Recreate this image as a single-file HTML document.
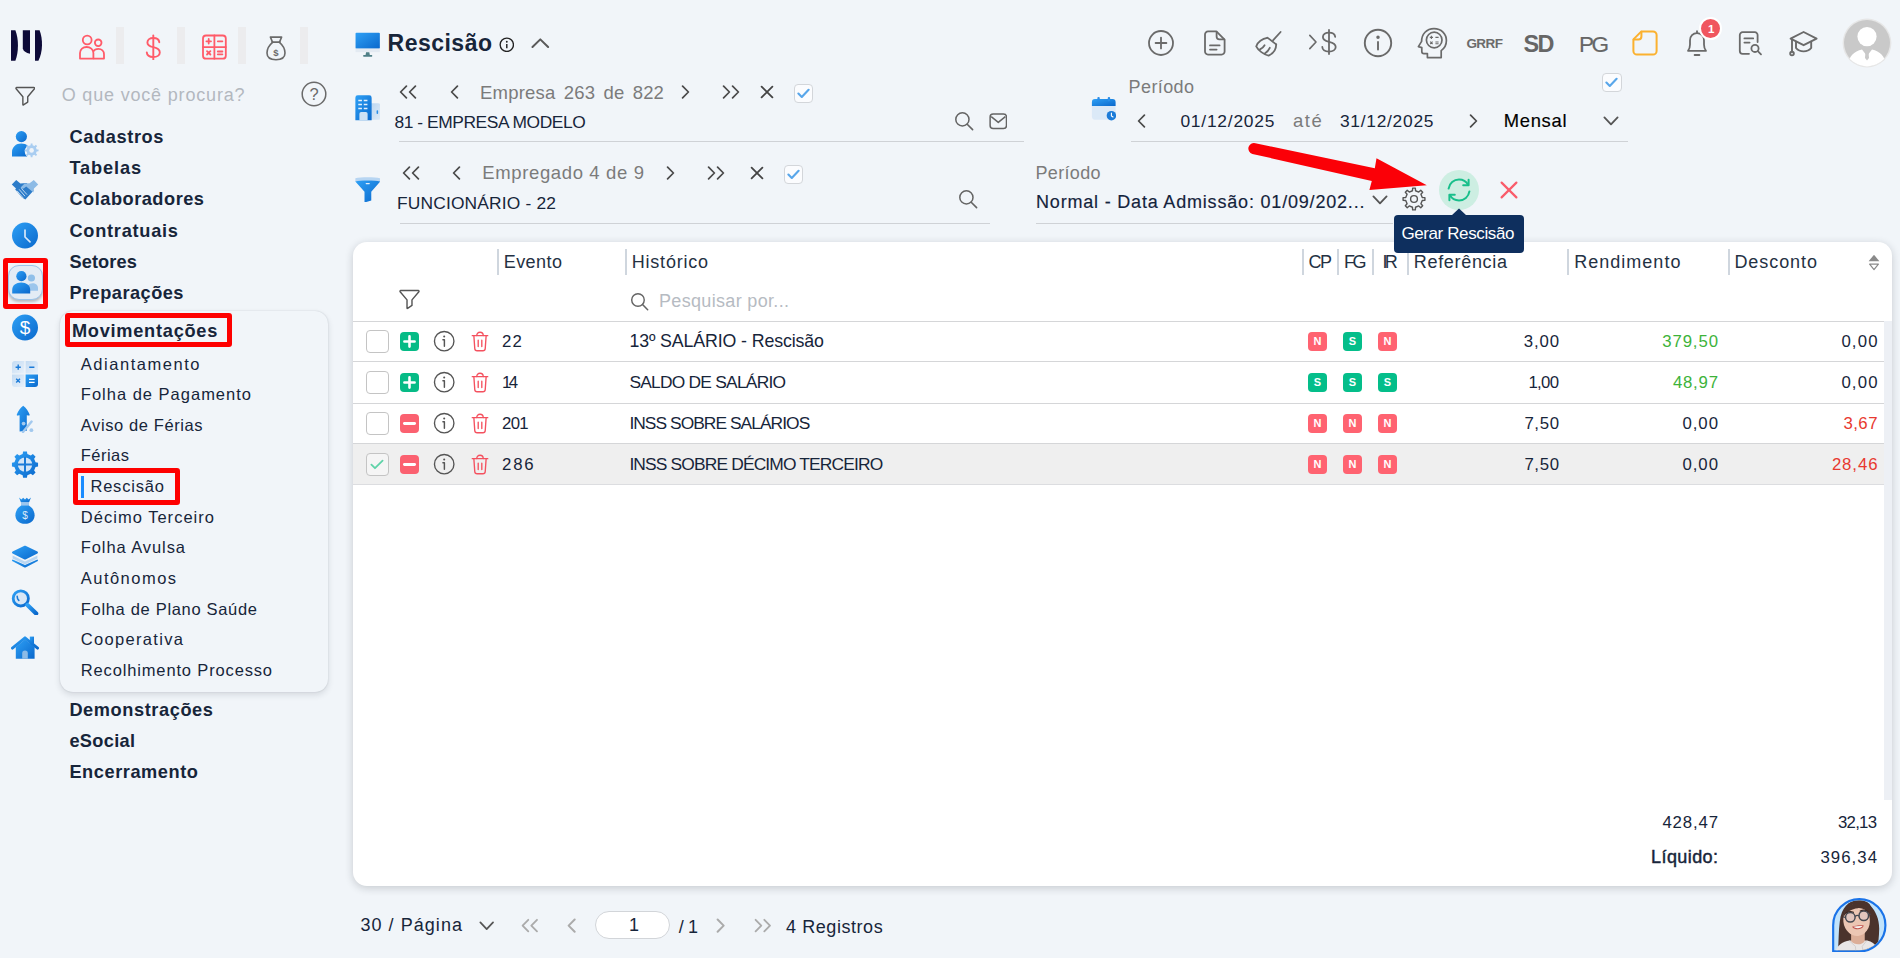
<!DOCTYPE html>
<html lang="pt-BR">
<head>
<meta charset="utf-8">
<title>Rescisão</title>
<style>
*{box-sizing:border-box;margin:0;padding:0}
html,body{width:1900px;height:958px;overflow:hidden}
body{background:#f1f5f9;font-family:"Liberation Sans", sans-serif;color:#17253a;position:relative}
div,span,svg.ic,a,h1,nav,ul,li,button,label,input,header,aside,main,section,footer,table,p{position:absolute}
ul{list-style:none}
a{text-decoration:none;color:inherit}
.tx{white-space:pre;line-height:1;display:block}
.sep{background:#ececee;width:8px;height:37px;top:27px}
.hl{border:5px solid #fe0000;border-radius:3px}
.panel{background:#f1f5f9;border-radius:13px;box-shadow:0 3px 6px rgba(30,40,55,.13),0 0 1.5px rgba(30,40,55,.2)}
.card{background:#fff;border-radius:14px;box-shadow:0 2px 8px rgba(25,30,40,.2)}
.ul{height:1px;background:#cfd2d6}
.vd{width:2px;height:25.6px;top:7.3px;background:#cfd6de}
.rl{height:1px;left:0;width:1531px;background:#d5d6d8}
.cb{width:22.5px;height:22.5px;border:1px solid #c4c4c4;border-radius:4px;background:#fff}
.cbs{width:19px;height:19px;border:1px solid #d3d6da;border-radius:4px;background:#fbfcfe}
.bd{width:19px;height:19px;border-radius:4px;color:#fff;font-weight:700;font-size:11px;line-height:19px;text-align:center}
.bn{background:#ff6371}
.bs{background:#04be8a}
.pm{width:19px;height:19px;border-radius:4px}
.z5{z-index:6}.md{-webkit-text-stroke:0.45px currentColor}.md2{-webkit-text-stroke:0.15px currentColor}</style>
</head>
<body>
<svg width="0" height="0" style="position:absolute"><defs><linearGradient id="gb" x1="0" y1="0" x2="1" y2="1"><stop offset="0" stop-color="#2ea0f5"/><stop offset="1" stop-color="#0a68cc"/></linearGradient><linearGradient id="gl" x1="0" y1="0" x2="1" y2="1"><stop offset="0" stop-color="#c3dbf3"/><stop offset="1" stop-color="#e9f1fa"/></linearGradient><linearGradient id="gl2" x1="0" y1="0" x2="1" y2="1"><stop offset="0" stop-color="#b9d6f2"/><stop offset="1" stop-color="#dfeaf6"/></linearGradient></defs></svg>
<aside style="left:0;top:0;width:340px;height:958px">
<svg class="ic" style="left:9.0px;top:29.0px;" width="34" height="32" viewBox="9 29 34 32" ><g fill="#0d0a38"><path d="M11 30.2 H15.4 C18.8 39 18.8 52 15.4 60.8 H11 Z"/><path d="M22.8 30.2 H30 V53.8 C26 53 23.4 51.4 22.8 48.6 Z"/><path d="M35 30.2 H39.6 C43 39 43 52 38.4 60.8 H35 Z"/></g></svg>
<nav style="left:60px;top:0;width:280px;height:70px">
<svg class="ic" style="left:17.0px;top:33.1px;" width="28" height="28" viewBox="77 33 28 28" ><g fill="none" stroke="#ff5b69" stroke-width="1.8" stroke-linejoin="round"><circle cx="87.2" cy="40" r="4.4"/><path d="M80 58.6 V53 C80 49.4 83 47 86.6 47 C90.2 47 93.4 49.4 93.4 53 V58.6 Z"/><circle cx="98.2" cy="42.8" r="3.3"/><path d="M93.4 58.6 H104 V54.2 C104 51 101.6 48.8 98.4 48.8 C96 48.8 94.2 49.8 93.2 51.4"/></g></svg>
<svg class="ic" style="left:79.0px;top:32.0px;" width="28" height="28" viewBox="139 32 28 28" ><g fill="none" stroke="#ff5b69" stroke-width="1.9" stroke-linecap="round"><path d="M153.3 35.4 V59.6"/><path d="M159.3 42.2 C159 39.6 156.6 38 153.3 38 C149.8 38 147.4 39.8 147.4 42.4 C147.4 45.4 150 46.4 153.3 47.2 C156.8 48 159.8 49.2 159.8 52.4 C159.8 55.2 157 57 153.3 57 C149.6 57 147 55.2 146.8 52.4"/></g></svg>
<svg class="ic" style="left:140.0px;top:33.3px;" width="28" height="28" viewBox="200 33.5 28 28" ><g fill="none" stroke="#ff5b69" stroke-width="1.8" stroke-linecap="round"><rect x="203" y="36" width="22.8" height="23.2" rx="3"/><path d="M214.4 36 V59.2 M203 47.6 H225.8"/><path d="M206.4 41.8 H211 M208.7 39.5 V44.1 M217.8 41.8 H222.4"/><path d="M207 51.6 L210.4 55 M210.4 51.6 L207 55 M217.8 52 H222.4 M217.8 54.8 H222.4"/></g></svg>
<svg class="ic" style="left:203.0px;top:34.7px;" width="26" height="26" viewBox="263 34.5 26 26" ><g fill="none" stroke="#6a6a6a" stroke-width="1.6" stroke-linejoin="round" stroke-linecap="round"><path d="M272.4 41.4 L270.4 36.6 H281.6 L279.6 41.4"/><path d="M272 41.6 H280"/><path d="M272.6 41.8 C269.4 44.4 267 48.6 267 52.6 C267 57 270 59.2 276 59.2 C282 59.2 285 57 285 52.6 C285 48.6 282.6 44.4 279.4 41.8"/></g><text x="276" y="55" font-family="Liberation Sans, sans-serif" font-size="9.5" font-weight="700" fill="#6a6a6a" text-anchor="middle">$</text></svg>
<div class="sep" style="left:56px"></div>
<div class="sep" style="left:117px"></div>
<div class="sep" style="left:178px"></div>
<div class="sep" style="left:240px"></div>
</nav>
<svg class="ic" style="left:14.7px;top:85.7px;" width="20.6" height="20.6" viewBox="0 0 22 22" ><path d="M1.8 1.6 H20.2 C20.9 1.6 21.2 2.4 20.8 2.9 L13.6 11.4 V17.2 L9 20.2 C8.6 20.5 8.4 20.2 8.4 19.8 V11.4 L1.2 2.9 C0.8 2.4 1.1 1.6 1.8 1.6 Z" fill="none" stroke="#555" stroke-width="1.5" stroke-linejoin="round"/></svg>
<label class="tx" style="left:61.7px;top:86.00px;font-size:18px;letter-spacing:0.82px;color:#b3b8bf;">O que você procura?</label>
<svg class="ic" style="left:301.0px;top:81.0px;" width="26" height="26" viewBox="0 0 26 26" ><circle cx="13" cy="13" r="11.8" fill="none" stroke="#6a6a6a" stroke-width="1.5"/><text x="13" y="19" font-family="Liberation Sans, sans-serif" font-size="16.5" fill="#6a6a6a" text-anchor="middle">?</text></svg>
<nav style="left:0;top:120px;width:50px;height:560px">
<div class="hl" style="left:2.5px;top:138px;width:45.5px;height:50.5px;"></div>
<div style="left:7.5px;top:144.5px;width:35px;height:35px;border-radius:11px;background:#e3ecf5;border:1px solid #9cc4ea;box-shadow:0 2px 3px rgba(0,0,0,.25)"></div>
<svg class="ic" style="left:11.0px;top:10.0px;" width="28" height="28" viewBox="0 0 28 28" ><circle cx="10.4" cy="6.6" r="5.6" fill="url(#gb)"/><path d="M1 26.6 V22.4 C1 17 5 13.6 10.2 13.6 C13 13.6 15.2 14.4 16.8 16 C14.6 17.4 13.6 19.6 13.8 22 C14 24 15 25.6 16.4 26.6 Z" fill="url(#gb)"/><path d="M19.60 15.30L19.70 13.46L21.50 13.46L21.60 15.30L23.50 16.08L24.87 14.85L26.15 16.13L24.92 17.50L25.70 19.40L27.54 19.50L27.54 21.30L25.70 21.40L24.92 23.30L26.15 24.67L24.87 25.95L23.50 24.72L21.60 25.50L21.50 27.34L19.70 27.34L19.60 25.50L17.70 24.72L16.33 25.95L15.05 24.67L16.28 23.30L15.50 21.40L13.66 21.30L13.66 19.50L15.50 19.40L16.28 17.50L15.05 16.13L16.33 14.85L17.70 16.08Z" fill="#a9cdf1"/><circle cx="20.6" cy="20.4" r="2.3" fill="#f0f4f9"/></svg>
<svg class="ic" style="left:11.0px;top:55.0px;" width="28" height="28" viewBox="0 0 28 28" ><path d="M0.8 9.6 L5.2 5 L9.4 8.4 L15.6 8 L22.6 15.4 L14.4 24.4 L11 22.4 L4.2 14.6 L5 13.4 Z" fill="#2d7cc9"/><path d="M27.2 9.6 L22.8 5 L18.6 8.2 L13.6 8.6 L9.6 12.6 C10.6 14 12.4 14 13.6 12.8 L15.2 11.4 L22.4 17.6 L23 13.4 Z" fill="#8dbbe6"/><path d="M6 15.8 L12.2 23 M8.2 14.4 L14 21.2 M10.4 13.4 L16 19.6" stroke="#cfe2f5" stroke-width="0.9" fill="none"/></svg>
<svg class="ic" style="left:11.0px;top:101.0px;" width="28" height="28" viewBox="0 0 28 28" ><circle cx="14" cy="14.6" r="13" fill="url(#gb)"/><path d="M14 9 V16 L19 20.8" fill="none" stroke="#d6e8fa" stroke-width="1.7" stroke-linecap="round" stroke-linejoin="round"/></svg>
<svg class="ic" style="left:11.0px;top:147.0px;" width="28" height="28" viewBox="0 0 28 28" ><circle cx="20.4" cy="11" r="3.6" fill="#8fbfe9"/><path d="M17 23.8 H27 V21 C27 18 24.6 16.2 21.6 16.2 C19.6 16.2 18 17 17 18.2 Z" fill="#9cc6ec"/><circle cx="10.4" cy="9.2" r="5.1" fill="url(#gb)"/><path d="M1.2 26.4 V23 C1.2 18.4 5 15.6 10.2 15.6 C15.4 15.6 19.2 18.4 19.2 23 V26.4 Z" fill="url(#gb)"/></svg>
<svg class="ic" style="left:11.0px;top:193.0px;" width="28" height="28" viewBox="0 0 28 28" ><circle cx="14" cy="14.6" r="13" fill="url(#gb)"/><text x="14" y="21.2" font-family="Liberation Sans, sans-serif" font-size="19" fill="#fff" text-anchor="middle">$</text></svg>
<svg class="ic" style="left:11.0px;top:240.0px;" width="28" height="28" viewBox="0 0 28 28" ><path d="M4 1 H13.4 V13.4 H1 V4 A3 3 0 0 1 4 1 Z" fill="url(#gl)"/><path d="M14.6 1 H24 A3 3 0 0 1 27 4 V13.4 H14.6 Z" fill="url(#gl)"/><path d="M1 14.6 H13.4 V27 H4 A3 3 0 0 1 1 24 Z" fill="url(#gl)"/><path d="M14.6 14.6 H27 V24 A3 3 0 0 1 24 27 H14.6 Z" fill="url(#gb)"/><path d="M4.6 7.2 H9.8 M7.2 4.6 V9.8 M18.2 7.2 H23.4 M5.2 18.8 L9 22.6 M9 18.8 L5.2 22.6" stroke="#1b7bd8" stroke-width="1.4" fill="none"/><path d="M18 19.4 H23.6 M18 22.4 H23.6" stroke="#fff" stroke-width="1.4" fill="none"/></svg>
<svg class="ic" style="left:11.0px;top:285.0px;" width="28" height="28" viewBox="0 0 28 28" ><path d="M12.2 0.8 C15 3 17.6 6.4 18.6 9.6 C18.8 10.4 18.4 10.8 17.6 10.6 L15.8 10.2 V25.8 L8.6 26.6 V10.2 L6.8 10.6 C6 10.8 5.6 10.4 5.8 9.6 C6.8 6.4 9.4 3 12.2 0.8 Z" fill="url(#gb)"/><path d="M20.6 16.6 L12 27" stroke="#a3c9ee" stroke-width="2.4" stroke-linecap="round"/><circle cx="12.6" cy="18.6" r="1.9" fill="#a3c9ee"/><circle cx="20.4" cy="25.2" r="1.9" fill="#a3c9ee"/></svg>
<svg class="ic" style="left:11.0px;top:331.0px;" width="28" height="28" viewBox="0 0 28 28" ><path d="M11.65 3.06L12.08 0.54L15.92 0.54L16.35 3.06L19.79 4.49L21.88 3.01L24.59 5.72L23.11 7.81L24.54 11.25L27.06 11.68L27.06 15.52L24.54 15.95L23.11 19.39L24.59 21.48L21.88 24.19L19.79 22.71L16.35 24.14L15.92 26.66L12.08 26.66L11.65 24.14L8.21 22.71L6.12 24.19L3.41 21.48L4.89 19.39L3.46 15.95L0.94 15.52L0.94 11.68L3.46 11.25L4.89 7.81L3.41 5.72L6.12 3.01L8.21 4.49Z" fill="url(#gb)"/><circle cx="14" cy="13.6" r="7.2" fill="#d3e5f7"/><path d="M14 6 V21.2 M6.4 13.6 H21.6" stroke="#1b7bd8" stroke-width="2" fill="none"/></svg>
<svg class="ic" style="left:11.0px;top:377.0px;" width="28" height="28" viewBox="0 0 28 28" ><path d="M8 0.6 L10.4 2.4 L12.2 0.8 L14 2.4 L15.8 0.8 L17.6 2.4 L20 0.6 L18 5.4 H10 Z" fill="url(#gb)"/><rect x="10" y="5.2" width="8" height="3.6" fill="#9cc6ee"/><path d="M10.2 8.6 H17.8 C21.4 10.6 23.6 14.4 23.6 18.2 C23.6 23.2 19.6 26.8 14 26.8 C8.4 26.8 4.4 23.2 4.4 18.2 C4.4 14.4 6.6 10.6 10.2 8.6 Z" fill="url(#gb)"/><text x="14" y="21.6" font-family="Liberation Sans, sans-serif" font-size="10" fill="#dcebfa" text-anchor="middle">$</text></svg>
<svg class="ic" style="left:11.0px;top:422.0px;" width="28" height="28" viewBox="0 0 28 28" ><path d="M1.6 17.4 L14 23 L26.4 17.4 C27.2 17.8 27.2 18.8 26.4 19.2 L15 25.2 C14.4 25.5 13.6 25.5 13 25.2 L1.6 19.2 C0.8 18.8 0.8 17.8 1.6 17.4 Z" fill="url(#gb)"/><path d="M1.6 13.6 L14 19.4 L26.4 13.6 V16.6 L14 22.4 L1.6 16.6 Z" fill="#b9d6f2"/><path d="M13 4 C13.6 3.7 14.4 3.7 15 4 L26.4 9.6 C27.2 10 27.2 11 26.4 11.4 L15 17.2 C14.4 17.5 13.6 17.5 13 17.2 L1.6 11.4 C0.8 11 0.8 10 1.6 9.6 Z" fill="url(#gb)"/></svg>
<svg class="ic" style="left:11.0px;top:467.0px;" width="28" height="28" viewBox="0 0 28 28" ><circle cx="9.8" cy="11.4" r="7.6" fill="#d8e7f6"/><circle cx="9.8" cy="11.4" r="7.6" fill="none" stroke="url(#gb)" stroke-width="2.8"/><path d="M16.4 18 L25.2 26.6" stroke="url(#gb)" stroke-width="4.2" stroke-linecap="round"/><path d="M6.2 9.4 C6.2 11 6.8 12.4 7.8 13.4" stroke="#1b7bd8" stroke-width="1.6" fill="none" stroke-linecap="round"/></svg>
<svg class="ic" style="left:11.0px;top:513.0px;" width="28" height="28" viewBox="0 0 28 28" ><rect x="18.8" y="3.6" width="4.2" height="9" fill="url(#gb)"/><path d="M4.8 14 L14 6.4 L23.6 14 V25.8 H4.8 Z" fill="url(#gb)"/><path d="M1.4 15.2 L14 4.8 L26.6 15.2" fill="none" stroke="url(#gb)" stroke-width="2.8" stroke-linecap="round" stroke-linejoin="round"/><path d="M11.2 25.8 V20.4 A2.8 2.8 0 0 1 16.8 20.4 V25.8 Z" fill="#8dbbe6"/></svg>
</nav>
<nav style="left:60px;top:120px;width:280px;height:680px">
<div class="panel" style="left:0px;top:191px;width:267.6px;height:381px;"></div>
<div class="hl" style="left:5px;top:193px;width:167px;height:34px;"></div>
<div class="hl" style="left:13.2px;top:348px;width:106.8px;height:37px;"></div>
<div style="left:21px;top:356px;width:3px;height:22px;background:#1a8cff"></div>
<a class="tx" style="left:9.4px;top:8.00px;font-size:18.2px;letter-spacing:0.64px;font-weight:700;">Cadastros</a>
<a class="tx" style="left:9.4px;top:39.00px;font-size:18.2px;letter-spacing:0.87px;font-weight:700;">Tabelas</a>
<a class="tx" style="left:9.4px;top:70.00px;font-size:18.2px;letter-spacing:0.52px;font-weight:700;">Colaboradores</a>
<a class="tx" style="left:9.4px;top:102.00px;font-size:18.2px;letter-spacing:0.75px;font-weight:700;">Contratuais</a>
<a class="tx" style="left:9.4px;top:133.00px;font-size:18.2px;letter-spacing:0.14px;font-weight:700;">Setores</a>
<a class="tx" style="left:9.4px;top:164.00px;font-size:18.2px;letter-spacing:0.49px;font-weight:700;">Preparações</a>
<a class="tx" style="left:11.9px;top:202.00px;font-size:18.2px;letter-spacing:0.75px;font-weight:700;">Movimentações</a>
<a class="tx" style="left:20.8px;top:236.00px;font-size:16.5px;letter-spacing:1.53px;">Adiantamento</a>
<a class="tx" style="left:20.8px;top:266.00px;font-size:16.5px;letter-spacing:1.00px;">Folha de Pagamento</a>
<a class="tx" style="left:20.8px;top:297.00px;font-size:16.5px;letter-spacing:0.60px;">Aviso de Férias</a>
<a class="tx" style="left:20.8px;top:327.00px;font-size:16.5px;letter-spacing:0.47px;">Férias</a>
<a class="tx" style="left:30.4px;top:358.00px;font-size:16.5px;letter-spacing:0.82px;">Rescisão</a>
<a class="tx" style="left:20.8px;top:389.00px;font-size:16.5px;letter-spacing:1.02px;">Décimo Terceiro</a>
<a class="tx" style="left:20.8px;top:419.00px;font-size:16.5px;letter-spacing:0.91px;">Folha Avulsa</a>
<a class="tx" style="left:20.8px;top:450.00px;font-size:16.5px;letter-spacing:1.47px;">Autônomos</a>
<a class="tx" style="left:20.8px;top:481.00px;font-size:16.5px;letter-spacing:0.68px;">Folha de Plano Saúde</a>
<a class="tx" style="left:20.8px;top:511.00px;font-size:16.5px;letter-spacing:1.32px;">Cooperativa</a>
<a class="tx" style="left:20.8px;top:542.00px;font-size:16.5px;letter-spacing:0.85px;">Recolhimento Processo</a>
<a class="tx" style="left:9.4px;top:581.00px;font-size:18.2px;letter-spacing:0.59px;font-weight:700;">Demonstrações</a>
<a class="tx" style="left:9.4px;top:612.00px;font-size:18.2px;letter-spacing:0.32px;font-weight:700;">eSocial</a>
<a class="tx" style="left:9.4px;top:643.00px;font-size:18.2px;letter-spacing:0.57px;font-weight:700;">Encerramento</a>
</nav>
</aside>
<header style="left:340px;top:0;width:1560px;height:70px">
<svg class="ic" style="left:14.9px;top:32.4px;" width="25.4" height="25.4" viewBox="0 0 28 28" ><rect x="0.6" y="0.8" width="26.8" height="17.6" rx="1" fill="url(#gb)"/><rect x="0.6" y="18.2" width="26.8" height="4" fill="#e3eaf2"/><path d="M12.2 22.2 H15.8 L16.4 25.6 H11.6 Z" fill="#4f7f86"/><rect x="9" y="25.4" width="10" height="1.8" rx="0.6" fill="#4f7f86"/></svg>
<h1 class="tx" style="left:47.6px;top:32.00px;font-size:23px;letter-spacing:0.48px;font-weight:700;">Rescisão</h1>
<svg class="ic" style="left:158.6px;top:36.6px;" width="15.6" height="15.6" viewBox="0 0 15 15" ><circle cx="7.5" cy="7.5" r="6.4" fill="none" stroke="#222" stroke-width="1.3"/><path d="M7.5 6.8 V10.8" stroke="#222" stroke-width="1.4"/><circle cx="7.5" cy="4.6" r="0.9" fill="#222"/></svg>
<svg class="ic" style="left:190.2px;top:32.9px;" width="20.6" height="20.6" viewBox="0 0 20 20" ><path d="M2.4 13.6 L10 6.2 L17.6 13.6" fill="none" stroke="#5a5a5a" stroke-width="2" stroke-linecap="round" stroke-linejoin="round"/></svg>
<svg class="ic" style="left:807.0px;top:29.0px;" width="28" height="28" viewBox="0 0 28 28" ><g fill="none" stroke="#6a6a6a" stroke-width="1.8" stroke-linecap="round" stroke-linejoin="round"><circle cx="14" cy="14" r="12"/><path d="M8.6 14 H19.4 M14 8.6 V19.4"/></g></svg>
<svg class="ic" style="left:862.0px;top:30.0px;" width="26" height="26" viewBox="0 0 26 26" ><g fill="none" stroke="#6a6a6a" stroke-width="1.8" stroke-linecap="round" stroke-linejoin="round"><path d="M6 1.4 H14.4 L22.6 9.6 V21.6 A3 3 0 0 1 19.6 24.6 H6 A3 3 0 0 1 3 21.6 V4.4 A3 3 0 0 1 6 1.4 Z"/><path d="M14.6 1.8 V6.6 A2.8 2.8 0 0 0 17.4 9.4 H22.2"/><path d="M8 15.4 H17.6 M8 19.6 H14.6"/></g></svg>
<svg class="ic" style="left:914.0px;top:29.0px;" width="28" height="28" viewBox="0 0 28 28" ><g fill="none" stroke="#6a6a6a" stroke-width="1.8" stroke-linecap="round" stroke-linejoin="round"><path d="M26.6 3 L19 11.4"/><path d="M13.4 8.6 L22.2 15.4"/><path d="M13.2 8.8 C8.6 9.6 3.4 13 2.2 17.4 C4.2 21.4 9.8 25.6 14.6 26.6 C19.4 24.2 22.2 19.6 22.2 15.4"/><path d="M6 20.4 C8 19.4 9.6 18 10.6 16.2 M10.8 24.4 C13 23 14.8 21 15.8 18.8"/></g></svg>
<svg class="ic" style="left:1023.0px;top:28.0px;" width="30" height="30" viewBox="0 0 30 30" ><g fill="none" stroke="#6a6a6a" stroke-width="1.9" stroke-linecap="round" stroke-linejoin="round"><circle cx="15" cy="15" r="13.2"/><path d="M15 14 V21.6"/><circle cx="15" cy="9.2" r="0.8" fill="#6a6a6a"/></g></svg>
<svg class="ic" style="left:1076.0px;top:27.0px;" width="32" height="32" viewBox="0 0 32 32" ><g fill="none" stroke="#6a6a6a" stroke-width="1.7" stroke-linecap="round" stroke-linejoin="round"><path d="M11.4 30.6 V26.6 H8 C6.6 26.6 5.8 25.8 5.8 24.4 V20.6 L2.4 19.6 L5.6 14.4 C5.6 7 10.6 1.6 18 1.6 C25.4 1.6 30.4 7 30.4 13.6 C30.4 18.4 28.2 21.6 25.2 23.6 V30.6 Z"/><circle cx="18.2" cy="13" r="7.8"/></g><g fill="none" stroke="#6a6a6a" stroke-width="1.1"><path d="M13.8 10.4 H17 M15.4 8.8 V12 M19.4 10.4 H22.6 M14.2 14.6 L16.6 17 M16.6 14.6 L14.2 17 M19.4 15 H22.6 M19.4 16.8 H22.6"/></g></svg>
<svg class="ic" style="left:1291.0px;top:29.0px;" width="28" height="28" viewBox="0 0 28 28" ><g fill="none" stroke="#fbb12f" stroke-width="2" stroke-linecap="round" stroke-linejoin="round"><path d="M10.4 2.4 H22 A3.6 3.6 0 0 1 25.6 6 V22 A3.6 3.6 0 0 1 22 25.6 H6 A3.6 3.6 0 0 1 2.4 22 V10.4 Z"/><path d="M10.4 2.8 V7.4 A3 3 0 0 1 7.4 10.4 H2.8"/></g></svg>
<svg class="ic" style="left:1343.0px;top:29.0px;" width="28" height="28" viewBox="0 0 28 28" ><g fill="none" stroke="#6a6a6a" stroke-width="1.8" stroke-linecap="round" stroke-linejoin="round"><path d="M14 2.2 V4"/><path d="M5 21.8 C6.6 20 7 18.4 7 15.6 V11.4 C7 7.2 10 4.2 14 4.2 C18 4.2 21 7.2 21 11.4 V15.6 C21 18.4 21.4 20 23 21.8 Z"/><path d="M11.6 26 H16.4"/></g></svg>
<svg class="ic" style="left:1397.0px;top:30.0px;" width="26" height="26" viewBox="0 0 26 26" ><g fill="none" stroke="#6a6a6a" stroke-width="1.8" stroke-linecap="round" stroke-linejoin="round"><path d="M20.6 12 V5 A2.8 2.8 0 0 0 17.8 2.2 H5.6 A2.8 2.8 0 0 0 2.8 5 V21 A2.8 2.8 0 0 0 5.6 23.8 H12"/><path d="M7.4 8.4 H16.2 M7.4 12.6 H12.6"/><circle cx="18" cy="18.4" r="3.6"/><path d="M20.8 21.2 L24 24.4"/></g></svg>
<svg class="ic" style="left:1448.0px;top:28.0px;" width="30" height="30" viewBox="0 0 30 30" ><g fill="none" stroke="#6a6a6a" stroke-width="1.9" stroke-linecap="round" stroke-linejoin="round"><path d="M15.6 4 L28.6 10.6 L15.6 17.2 L2.6 10.6 Z"/><path d="M8 13.6 V20 C10 22.4 12.6 23.4 15.6 23.4 C18.6 23.4 21.2 22.4 23.2 20 V13.6"/><path d="M4 11.6 V23.6"/><circle cx="4" cy="25.6" r="1.8"/></g></svg>
<svg class="ic" style="left:968.2px;top:34.1px;" width="10" height="16" viewBox="0 0 10 16" ><path d="M1.8 1.4 L8 8 L1.8 14.6" fill="none" stroke="#6a6a6a" stroke-width="1.6" stroke-linecap="round" stroke-linejoin="round"/></svg>
<svg class="ic" style="left:981.0px;top:29.0px;" width="16" height="26" viewBox="145.3 34.6 16 26" ><g fill="none" stroke="#6a6a6a" stroke-width="1.8" stroke-linecap="round"><path d="M153.3 35.6 V59.6"/><path d="M159.5 42.4 C159.2 39.8 156.8 38.2 153.3 38.2 C149.8 38.2 147.2 40 147.2 42.6 C147.2 45.6 149.8 46.6 153.3 47.4 C157 48.2 160 49.4 160 52.6 C160 55.4 157.2 57.2 153.3 57.2 C149.4 57.2 146.8 55.4 146.6 52.6"/></g></svg>
<span class="tx" style="left:1126.4px;top:37.00px;font-size:13.5px;letter-spacing:-0.55px;font-weight:700;color:#6b6b6b;">GRRF</span>
<span class="tx" style="left:1183.4px;top:33.00px;font-size:23.4px;letter-spacing:-1.50px;font-weight:700;color:#666;">SD</span>
<span class="tx md2" style="left:1239.0px;top:34.00px;font-size:22.6px;letter-spacing:-2.60px;color:#666;">PG</span>
<div style="left:1358.8px;top:16.9px;width:23.4px;height:23.4px;border-radius:50%;background:#f0565f;border:2px solid #fff"></div>
<span class="tx" style="left:1368.0px;top:24.00px;font-size:11.5px;letter-spacing:-1.01px;font-weight:700;color:#fff;">1</span>
<svg class="ic" style="left:1502.0px;top:17.5px;" width="50" height="50" viewBox="0 0 50 50" ><clipPath id="cav"><circle cx="25" cy="25" r="23.4"/></clipPath><circle cx="25" cy="25" r="24.4" fill="#e6e6e6"/><circle cx="25" cy="25" r="23" fill="#c9c9c9"/><g clip-path="url(#cav)"><circle cx="25" cy="18.6" r="9.6" fill="#fff"/><path d="M6 50 C6 38 12 33.4 20 31.4 L25 38 L30 31.4 C38 33.4 44 38 44 50 Z" fill="#fff"/><path d="M23.6 32.6 H26.4 L27 40 L25 42.6 L23 40 Z" fill="#c9c9c9"/></g></svg>
</header>
<section style="left:340px;top:70px;width:1560px;height:165px">
<svg class="ic" style="left:14.8px;top:25.4px;" width="25.6" height="25.6" viewBox="0 0 28 28" ><path d="M17 9 H25.4 A2.2 2.2 0 0 1 27.6 11.2 V25 A2.2 2.2 0 0 1 25.4 27.2 H17 Z" fill="url(#gl2)"/><rect x="23.6" y="16.6" width="1.7" height="4.2" rx="0.8" fill="#2a8ee8"/><path d="M3 0.4 H15.6 A2.6 2.6 0 0 1 18.2 3 V27.6 H0.4 V3 A2.6 2.6 0 0 1 3 0.4 Z" fill="url(#gb)"/><path d="M3.6 6 H7.6 M9.6 6 H13.6 M3.6 10.4 H7.6 M9.6 10.4 H13.6 M3.6 14.8 H7.6 M9.6 14.8 H13.6" stroke="#e6f1fc" stroke-width="1.8" fill="none"/><path d="M4.8 27.6 V20.6 A2 2 0 0 1 6.8 18.6 H11.8 A2 2 0 0 1 13.8 20.6 V27.6 Z" fill="#cfe1f4"/></svg>
<svg class="ic" style="left:58.0px;top:15.0px;" width="20" height="14" viewBox="0 0 20 14" ><path d="M8.4 1.2 L2.6 7 L8.4 12.8 M17.4 1.2 L11.6 7 L17.4 12.8" fill="none" stroke="#4a4a4a" stroke-width="1.7" stroke-linecap="round" stroke-linejoin="round"/></svg>
<svg class="ic" style="left:109.7px;top:15.4px;" width="9" height="14" viewBox="0 0 9 14" ><path d="M7.4 1.2 L1.6 7 L7.4 12.8" fill="none" stroke="#4a4a4a" stroke-width="1.7" stroke-linecap="round" stroke-linejoin="round"/></svg>
<span class="tx" style="left:140.1px;top:14.00px;font-size:18.5px;letter-spacing:0.18px;color:#7b7b7b;word-spacing:3px;">Empresa 263 de 822</span>
<svg class="ic" style="left:340.5px;top:15.0px;" width="9" height="14" viewBox="0 0 9 14" ><path d="M1.6 1.2 L7.4 7 L1.6 12.8" fill="none" stroke="#4a4a4a" stroke-width="1.7" stroke-linecap="round" stroke-linejoin="round"/></svg>
<svg class="ic" style="left:381.0px;top:15.0px;" width="20" height="14" viewBox="0 0 20 14" ><path d="M2.6 1.2 L8.4 7 L2.6 12.8 M11.6 1.2 L17.4 7 L11.6 12.8" fill="none" stroke="#4a4a4a" stroke-width="1.7" stroke-linecap="round" stroke-linejoin="round"/></svg>
<svg class="ic" style="left:420.0px;top:15.0px;" width="14" height="14" viewBox="0 0 14 14" ><path d="M1.6 1.6 L12.4 12.4 M12.4 1.6 L1.6 12.4" fill="none" stroke="#444" stroke-width="1.8" stroke-linecap="round" stroke-linejoin="round"/></svg>
<div class="cbs" style="left:454.1px;top:14.099999999999994px;width:19px;height:18.6px;"><svg class="ic" style="left:2px;top:3px" width="13" height="11" viewBox="0 0 13 11"><path d="M1.4 5.6 L4.8 9 L11.6 1.8" fill="none" stroke="#58a6ea" stroke-width="2.1" stroke-linecap="round" stroke-linejoin="round"/></svg></div>
<span class="tx" style="left:54.5px;top:44.00px;font-size:17.4px;letter-spacing:-0.44px;">81 - EMPRESA MODELO</span>
<svg class="ic" style="left:613.9px;top:41.0px;" width="20" height="20" viewBox="0 0 20 20" ><circle cx="8.4" cy="8.4" r="6.6" fill="none" stroke="#646464" stroke-width="1.5"/><path d="M13.2 13.2 L18.6 18.6" stroke="#646464" stroke-width="1.6" stroke-linecap="round"/></svg>
<svg class="ic" style="left:648.7px;top:41.7px;" width="18.6" height="18.6" viewBox="0 0 20 20" ><rect x="1.2" y="2.2" width="17.6" height="15.6" rx="3.2" fill="none" stroke="#646464" stroke-width="1.6"/><path d="M2.4 5 L10 11.2 L17.6 5" fill="none" stroke="#646464" stroke-width="1.6" stroke-linejoin="round"/></svg>
<div class="ul" style="left:59.30000000000001px;top:71px;width:625px;height:1px;"></div>
<svg class="ic" style="left:750.8px;top:25.8px;" width="25.5" height="25.5" viewBox="0 0 28 28" ><rect x="1" y="3.4" width="26" height="22.6" rx="3.4" fill="#dbe9f7"/><path d="M4.4 3.4 H23.6 A3.4 3.4 0 0 1 27 6.8 V11 H1 V6.8 A3.4 3.4 0 0 1 4.4 3.4 Z" fill="url(#gb)"/><rect x="7" y="1" width="2.6" height="5" rx="1.2" fill="#2a8ee8"/><rect x="18.4" y="1" width="2.6" height="5" rx="1.2" fill="#2a8ee8"/><circle cx="22.4" cy="21.6" r="5.2" fill="#1b7bd8"/><path d="M22.4 18.8 V21.8 L24.2 23" stroke="#fff" stroke-width="1.2" fill="none" stroke-linecap="round"/></svg>
<label class="tx" style="left:788.6px;top:8.00px;font-size:18px;letter-spacing:0.39px;color:#7b7b7b;">Período</label>
<div class="cbs" style="left:1262.3px;top:3.299999999999997px;width:19.4px;height:18.6px;"><svg class="ic" style="left:2px;top:3px" width="13" height="11" viewBox="0 0 13 11"><path d="M1.4 5.6 L4.8 9 L11.6 1.8" fill="none" stroke="#58a6ea" stroke-width="2.1" stroke-linecap="round" stroke-linejoin="round"/></svg></div>
<svg class="ic" style="left:796.5px;top:44.0px;" width="9" height="14" viewBox="0 0 9 14" ><path d="M7.4 1.2 L1.6 7 L7.4 12.8" fill="none" stroke="#4a4a4a" stroke-width="1.7" stroke-linecap="round" stroke-linejoin="round"/></svg>
<span class="tx" style="left:840.4px;top:43.00px;font-size:17.4px;letter-spacing:0.78px;">01/12/2025</span>
<span class="tx" style="left:953.1px;top:42.00px;font-size:18.5px;letter-spacing:1.44px;color:#7b7b7b;">até</span>
<span class="tx" style="left:999.9px;top:43.00px;font-size:17.4px;letter-spacing:0.73px;">31/12/2025</span>
<svg class="ic" style="left:1128.5px;top:44.0px;" width="9" height="14" viewBox="0 0 9 14" ><path d="M1.6 1.2 L7.4 7 L1.6 12.8" fill="none" stroke="#4a4a4a" stroke-width="1.7" stroke-linecap="round" stroke-linejoin="round"/></svg>
<span class="tx md2" style="left:1163.8px;top:42.00px;font-size:18.4px;letter-spacing:0.68px;color:#000;">Mensal</span>
<svg class="ic" style="left:1263.0px;top:46.0px;" width="16" height="10" viewBox="0 0 16 10" ><path d="M1.4 1.4 L8 8.4 L14.6 1.4" fill="none" stroke="#555" stroke-width="1.8" stroke-linecap="round" stroke-linejoin="round"/></svg>
<div class="ul" style="left:791px;top:71px;width:497px;height:1px;"></div>
<svg class="ic" style="left:14.8px;top:106.6px;" width="25.6" height="25.6" viewBox="0 0 28 28" ><path d="M0.4 5.6 C5 3.6 23 3.6 27.6 5.6 V1.4 C22 -0.2 6 -0.2 0.4 1.4 Z" fill="#b7d5f2"/><path d="M0.4 5 C6 3.6 22 3.6 27.6 5 L17.8 16 V25.6 L10.4 28 V16 Z" fill="url(#gb)"/><rect x="11.6" y="6.6" width="4.6" height="1.2" rx="0.6" fill="#e3effb"/></svg>
<svg class="ic" style="left:61.0px;top:96.0px;" width="20" height="14" viewBox="0 0 20 14" ><path d="M8.4 1.2 L2.6 7 L8.4 12.8 M17.4 1.2 L11.6 7 L17.4 12.8" fill="none" stroke="#4a4a4a" stroke-width="1.7" stroke-linecap="round" stroke-linejoin="round"/></svg>
<svg class="ic" style="left:111.5px;top:96.4px;" width="9" height="14" viewBox="0 0 9 14" ><path d="M7.4 1.2 L1.6 7 L7.4 12.8" fill="none" stroke="#4a4a4a" stroke-width="1.7" stroke-linecap="round" stroke-linejoin="round"/></svg>
<span class="tx" style="left:142.2px;top:94.00px;font-size:18.5px;letter-spacing:0.64px;color:#7b7b7b;">Empregado 4 de 9</span>
<svg class="ic" style="left:325.5px;top:96.0px;" width="9" height="14" viewBox="0 0 9 14" ><path d="M1.6 1.2 L7.4 7 L1.6 12.8" fill="none" stroke="#4a4a4a" stroke-width="1.7" stroke-linecap="round" stroke-linejoin="round"/></svg>
<svg class="ic" style="left:366.0px;top:96.0px;" width="20" height="14" viewBox="0 0 20 14" ><path d="M2.6 1.2 L8.4 7 L2.6 12.8 M11.6 1.2 L17.4 7 L11.6 12.8" fill="none" stroke="#4a4a4a" stroke-width="1.7" stroke-linecap="round" stroke-linejoin="round"/></svg>
<svg class="ic" style="left:410.0px;top:96.0px;" width="14" height="14" viewBox="0 0 14 14" ><path d="M1.6 1.6 L12.4 12.4 M12.4 1.6 L1.6 12.4" fill="none" stroke="#444" stroke-width="1.8" stroke-linecap="round" stroke-linejoin="round"/></svg>
<div class="cbs" style="left:444.20000000000005px;top:95.19999999999999px;width:19px;height:18.6px;"><svg class="ic" style="left:2px;top:3px" width="13" height="11" viewBox="0 0 13 11"><path d="M1.4 5.6 L4.8 9 L11.6 1.8" fill="none" stroke="#58a6ea" stroke-width="2.1" stroke-linecap="round" stroke-linejoin="round"/></svg></div>
<span class="tx" style="left:57.0px;top:125.00px;font-size:17.4px;letter-spacing:0.16px;">FUNCIONÁRIO - 22</span>
<svg class="ic" style="left:617.8px;top:119.0px;" width="20" height="20" viewBox="0 0 20 20" ><circle cx="8.4" cy="8.4" r="6.6" fill="none" stroke="#646464" stroke-width="1.5"/><path d="M13.2 13.2 L18.6 18.6" stroke="#646464" stroke-width="1.6" stroke-linecap="round"/></svg>
<div class="ul" style="left:60px;top:152.8px;width:590px;height:1px;"></div>
<label class="tx" style="left:695.4px;top:94.00px;font-size:18px;letter-spacing:0.36px;color:#7b7b7b;">Período</label>
<span class="tx md2" style="left:696.0px;top:123.00px;font-size:18px;letter-spacing:0.81px;color:#14233c;">Normal - Data Admissão: 01/09/202...</span>
<svg class="ic" style="left:1032.0px;top:125.0px;" width="16" height="10" viewBox="0 0 16 10" ><path d="M1.4 1.4 L8 8.4 L14.6 1.4" fill="none" stroke="#555" stroke-width="1.8" stroke-linecap="round" stroke-linejoin="round"/></svg>
<svg class="ic" style="left:1061.5px;top:117.0px;" width="24" height="24" viewBox="0 0 24 24" ><path d="M10.46 3.74L10.66 1.08L13.34 1.08L13.54 3.74L16.75 5.07L18.77 3.33L20.67 5.23L18.93 7.25L20.26 10.46L22.92 10.66L22.92 13.34L20.26 13.54L18.93 16.75L20.67 18.77L18.77 20.67L16.75 18.93L13.54 20.26L13.34 22.92L10.66 22.92L10.46 20.26L7.25 18.93L5.23 20.67L3.33 18.77L5.07 16.75L3.74 13.54L1.08 13.34L1.08 10.66L3.74 10.46L5.07 7.25L3.33 5.23L5.23 3.33L7.25 5.07Z" fill="none" stroke="#555" stroke-width="1.4" stroke-linejoin="round"/><circle cx="12" cy="12" r="3.4" fill="none" stroke="#555" stroke-width="1.4"/></svg>
<button type="button" style="left:1099px;top:99.5px;width:40px;height:40px;border-radius:50%;background:#cdeee2;border:0"><svg class="ic" style="left:6.0px;top:6.0px;" width="28" height="28" viewBox="0 0 28 28" ><g fill="none" stroke="#18bf8b" stroke-width="2" stroke-linecap="round" stroke-linejoin="round"><path d="M3.6 12.6 C4.4 7.2 8.8 3.6 14 3.6 C18 3.6 21.4 5.8 23.2 9"/><path d="M23.6 3.8 V9.2 H18.2"/><path d="M24.4 15.4 C23.6 20.8 19.2 24.4 14 24.4 C10 24.4 6.6 22.2 4.8 19"/><path d="M4.4 24.2 V18.8 H9.8"/></g></svg></button>
<svg class="ic" style="left:1160.0px;top:110.5px;" width="18" height="18" viewBox="0 0 18 18" ><path d="M1.6 1.6 L16.4 16.4 M16.4 1.6 L1.6 16.4" fill="none" stroke="#f95c6b" stroke-width="2.2" stroke-linecap="round" stroke-linejoin="round"/></svg>
<div class="ul" style="left:696px;top:152.6px;width:357px;height:1px;"></div>
<svg class="ic" style="left:900px;top:70px" width="200" height="60" viewBox="1240 140 200 60"><path d="M1255.4 143.2 L1374.8 168.3 L1376.5 158.3 L1426.8 185.2 L1369.4 189.9 L1371.8 180.9 L1252.4 153.9 A5.5 5.5 0 0 1 1255.4 143.2 Z" fill="#fb0007"/></svg>
<div style="left:1053.5px;top:145px;width:130px;height:38px;background:#0e2f5e;border-radius:4px;z-index:5"></div>
<svg class="ic" style="left:1111px;top:138px;z-index:5" width="16" height="8" viewBox="0 0 16 8"><path d="M0 8L8 0.5L16 8Z" fill="#0e2f5e"/></svg>
<span class="tx z5" style="left:1061.4px;top:155.00px;font-size:17px;letter-spacing:-0.39px;color:#fff;">Gerar Rescisão</span>
</section>
<main class="card" style="left:353px;top:242px;width:1539px;height:644px;overflow:hidden">
<div class="vd" style="left:144px"></div>
<div class="vd" style="left:272px"></div>
<div class="vd" style="left:949px"></div>
<div class="vd" style="left:984px"></div>
<div class="vd" style="left:1019px"></div>
<div class="vd" style="left:1054px"></div>
<div class="vd" style="left:1214px"></div>
<div class="vd" style="left:1375px"></div>
<span class="tx" style="left:150.7px;top:11.00px;font-size:18px;letter-spacing:0.45px;color:#243143;">Evento</span>
<span class="tx" style="left:278.8px;top:11.00px;font-size:18px;letter-spacing:0.77px;color:#243143;">Histórico</span>
<span class="tx" style="left:955.4px;top:11.00px;font-size:18px;letter-spacing:-1.42px;color:#243143;">CP</span>
<span class="tx" style="left:991.0px;top:11.00px;font-size:18px;letter-spacing:-2.50px;color:#243143;">FG</span>
<span class="tx" style="left:1029.4px;top:11.00px;font-size:18px;letter-spacing:-2.60px;color:#243143;">IR</span>
<span class="tx" style="left:1060.8px;top:11.00px;font-size:18px;letter-spacing:0.68px;color:#243143;">Referência</span>
<span class="tx" style="left:1221.2px;top:11.00px;font-size:18px;letter-spacing:1.02px;color:#243143;">Rendimento</span>
<span class="tx" style="left:1381.4px;top:11.00px;font-size:18px;letter-spacing:0.94px;color:#243143;">Desconto</span>
<svg class="ic" style="left:1514.5px;top:11.5px;" width="12" height="17" viewBox="0 0 12 17" ><path d="M6 0.8 L11.4 7.2 H0.6 Z" fill="#8a8a8a"/><path d="M1.6 10.2 H10.4 L6 15.6 Z" fill="none" stroke="#8a8a8a" stroke-width="1.2" stroke-linejoin="round"/></svg>
<svg class="ic" style="left:46.0px;top:47.0px;" width="21" height="21" viewBox="0 0 22 22" ><path d="M1.8 1.6 H20.2 C20.9 1.6 21.2 2.4 20.8 2.9 L13.6 11.4 V17.2 L9 20.2 C8.6 20.5 8.4 20.2 8.4 19.8 V11.4 L1.2 2.9 C0.8 2.4 1.1 1.6 1.8 1.6 Z" fill="none" stroke="#555" stroke-width="1.5" stroke-linejoin="round"/></svg>
<svg class="ic" style="left:276.5px;top:50.0px;" width="19" height="19" viewBox="0 0 20 20" ><circle cx="8.4" cy="8.4" r="6.6" fill="none" stroke="#646464" stroke-width="1.5"/><path d="M13.2 13.2 L18.6 18.6" stroke="#646464" stroke-width="1.6" stroke-linecap="round"/></svg>
<label class="tx" style="left:306.0px;top:50.00px;font-size:18px;letter-spacing:0.33px;color:#b6bbc2;">Pesquisar por...</label>
<div style="left:1531px;top:79px;width:8px;height:478.5px;background:#edf0f5"></div>
<div style="left:0;top:79.0px;width:1531px;height:40.0px;"><div class="rl" style="top:0"></div>
<div class="cb" style="left:13.3px;top:9.199999999999978px;width:22.4px;height:22.4px;"></div>
<div class="pm" style="left:46.8px;top:11.099999999999977px;width:19.4px;height:18.9px;background:#06bb86"><svg class="ic" style="left:0;top:0" width="19" height="19" viewBox="0 0 19 19"><path d="M4.4 9.5 H14.6 M9.5 4.4 V14.6" stroke="#fff" stroke-width="2.6" stroke-linecap="round"/></svg></div>
<svg class="ic" style="left:80.2px;top:9.2px;" width="22.4" height="22.4" viewBox="0 0 23 23" ><circle cx="11.5" cy="11.5" r="10" fill="none" stroke="#555" stroke-width="1.4"/><path d="M10.2 10 H11.7 V16.8" fill="none" stroke="#555" stroke-width="1.5" stroke-linecap="round" stroke-linejoin="round"/><circle cx="11.5" cy="6.6" r="1.05" fill="#555"/></svg>
<svg class="ic" style="left:117.6px;top:9.9px;" width="18" height="21" viewBox="0 0 20 23" ><g fill="none" stroke="#f4515f" stroke-width="1.5" stroke-linecap="round" stroke-linejoin="round"><path d="M1.4 5 H18.6"/><path d="M6.4 4.8 C6.4 2.6 7.8 1.2 10 1.2 C12.2 1.2 13.6 2.6 13.6 4.8"/><path d="M3.2 5.2 L4.2 19.4 A2.6 2.6 0 0 0 6.8 21.8 H13.2 A2.6 2.6 0 0 0 15.8 19.4 L16.8 5.2"/><path d="M8 10 V17 M12 10 V17"/></g></svg>
<span class="tx" style="left:149.0px;top:13.00px;font-size:16.8px;letter-spacing:1.13px;">22</span>
<span class="tx" style="left:276.4px;top:12.00px;font-size:17.8px;letter-spacing:-0.13px;">13º SALÁRIO - Rescisão</span>
<span class="bd bn" style="left:955px;top:11.2px">N</span>
<span class="bd bs" style="left:990px;top:11.2px">S</span>
<span class="bd bn" style="left:1025px;top:11.2px">N</span>
<span class="tx" style="left:1170.7px;top:13.00px;font-size:16.8px;letter-spacing:0.88px;">3,00</span>
<span class="tx" style="left:1309.2px;top:13.00px;font-size:16.8px;letter-spacing:0.89px;color:#3db33a;">379,50</span>
<span class="tx" style="left:1488.4px;top:13.00px;font-size:16.8px;letter-spacing:1.14px;">0,00</span>
</div>
<div style="left:0;top:119.0px;width:1531px;height:41.6px;"><div class="rl" style="top:0"></div>
<div class="cb" style="left:13.3px;top:10.3px;width:22.4px;height:22.4px;"></div>
<div class="pm" style="left:46.8px;top:12.2px;width:19.4px;height:18.9px;background:#06bb86"><svg class="ic" style="left:0;top:0" width="19" height="19" viewBox="0 0 19 19"><path d="M4.4 9.5 H14.6 M9.5 4.4 V14.6" stroke="#fff" stroke-width="2.6" stroke-linecap="round"/></svg></div>
<svg class="ic" style="left:80.2px;top:10.3px;" width="22.4" height="22.4" viewBox="0 0 23 23" ><circle cx="11.5" cy="11.5" r="10" fill="none" stroke="#555" stroke-width="1.4"/><path d="M10.2 10 H11.7 V16.8" fill="none" stroke="#555" stroke-width="1.5" stroke-linecap="round" stroke-linejoin="round"/><circle cx="11.5" cy="6.6" r="1.05" fill="#555"/></svg>
<svg class="ic" style="left:117.6px;top:11.0px;" width="18" height="21" viewBox="0 0 20 23" ><g fill="none" stroke="#f4515f" stroke-width="1.5" stroke-linecap="round" stroke-linejoin="round"><path d="M1.4 5 H18.6"/><path d="M6.4 4.8 C6.4 2.6 7.8 1.2 10 1.2 C12.2 1.2 13.6 2.6 13.6 4.8"/><path d="M3.2 5.2 L4.2 19.4 A2.6 2.6 0 0 0 6.8 21.8 H13.2 A2.6 2.6 0 0 0 15.8 19.4 L16.8 5.2"/><path d="M8 10 V17 M12 10 V17"/></g></svg>
<span class="tx" style="left:149.0px;top:14.00px;font-size:16.8px;letter-spacing:-2.60px;">14</span>
<span class="tx" style="left:276.4px;top:13.00px;font-size:17.4px;letter-spacing:-0.77px;">SALDO DE SALÁRIO</span>
<span class="bd bs" style="left:955px;top:12.3px">S</span>
<span class="bd bs" style="left:990px;top:12.3px">S</span>
<span class="bd bs" style="left:1025px;top:12.3px">S</span>
<span class="tx" style="left:1175.4px;top:14.00px;font-size:16.8px;letter-spacing:-0.69px;">1,00</span>
<span class="tx" style="left:1319.9px;top:14.00px;font-size:16.8px;letter-spacing:0.77px;color:#3db33a;">48,97</span>
<span class="tx" style="left:1488.4px;top:14.00px;font-size:16.8px;letter-spacing:1.14px;">0,00</span>
</div>
<div style="left:0;top:160.6px;width:1531px;height:40.7px;"><div class="rl" style="top:0"></div>
<div class="cb" style="left:13.3px;top:9.699999999999978px;width:22.4px;height:22.4px;"></div>
<div class="pm" style="left:46.8px;top:11.599999999999977px;width:19.4px;height:18.9px;background:#fb6170"><svg class="ic" style="left:0;top:0" width="19" height="19" viewBox="0 0 19 19"><path d="M4.4 9.5 H14.6" stroke="#fff" stroke-width="2.8" stroke-linecap="round"/></svg></div>
<svg class="ic" style="left:80.2px;top:9.7px;" width="22.4" height="22.4" viewBox="0 0 23 23" ><circle cx="11.5" cy="11.5" r="10" fill="none" stroke="#555" stroke-width="1.4"/><path d="M10.2 10 H11.7 V16.8" fill="none" stroke="#555" stroke-width="1.5" stroke-linecap="round" stroke-linejoin="round"/><circle cx="11.5" cy="6.6" r="1.05" fill="#555"/></svg>
<svg class="ic" style="left:117.6px;top:10.4px;" width="18" height="21" viewBox="0 0 20 23" ><g fill="none" stroke="#f4515f" stroke-width="1.5" stroke-linecap="round" stroke-linejoin="round"><path d="M1.4 5 H18.6"/><path d="M6.4 4.8 C6.4 2.6 7.8 1.2 10 1.2 C12.2 1.2 13.6 2.6 13.6 4.8"/><path d="M3.2 5.2 L4.2 19.4 A2.6 2.6 0 0 0 6.8 21.8 H13.2 A2.6 2.6 0 0 0 15.8 19.4 L16.8 5.2"/><path d="M8 10 V17 M12 10 V17"/></g></svg>
<span class="tx" style="left:149.0px;top:13.00px;font-size:16.8px;letter-spacing:-0.70px;">201</span>
<span class="tx" style="left:276.4px;top:12.00px;font-size:17.4px;letter-spacing:-0.96px;">INSS SOBRE SALÁRIOS</span>
<span class="bd bn" style="left:955px;top:11.7px">N</span>
<span class="bd bn" style="left:990px;top:11.7px">N</span>
<span class="bd bn" style="left:1025px;top:11.7px">N</span>
<span class="tx" style="left:1171.4px;top:13.00px;font-size:16.8px;letter-spacing:0.64px;">7,50</span>
<span class="tx" style="left:1329.4px;top:13.00px;font-size:16.8px;letter-spacing:0.98px;">0,00</span>
<span class="tx" style="left:1490.4px;top:13.00px;font-size:16.8px;letter-spacing:0.48px;color:#e8392f;">3,67</span>
</div>
<div style="left:0;top:201.3px;width:1531px;height:40.6px;background:#efefef;"><div class="rl" style="top:0"></div>
<div class="cb" style="left:13.3px;top:9.99999999999999px;width:22.4px;height:22.4px;background:#f5f5f5"><svg class="ic" style="left:3px;top:5px" width="14" height="11" viewBox="0 0 14 11"><path d="M1.4 5.6 L5 9.2 L12.6 1.6" fill="none" stroke="#5fd3a8" stroke-width="1.8" stroke-linecap="round" stroke-linejoin="round"/></svg></div>
<div class="pm" style="left:46.8px;top:11.899999999999988px;width:19.4px;height:18.9px;background:#fb6170"><svg class="ic" style="left:0;top:0" width="19" height="19" viewBox="0 0 19 19"><path d="M4.4 9.5 H14.6" stroke="#fff" stroke-width="2.8" stroke-linecap="round"/></svg></div>
<svg class="ic" style="left:80.2px;top:10.0px;" width="22.4" height="22.4" viewBox="0 0 23 23" ><circle cx="11.5" cy="11.5" r="10" fill="none" stroke="#555" stroke-width="1.4"/><path d="M10.2 10 H11.7 V16.8" fill="none" stroke="#555" stroke-width="1.5" stroke-linecap="round" stroke-linejoin="round"/><circle cx="11.5" cy="6.6" r="1.05" fill="#555"/></svg>
<svg class="ic" style="left:117.6px;top:10.7px;" width="18" height="21" viewBox="0 0 20 23" ><g fill="none" stroke="#f4515f" stroke-width="1.5" stroke-linecap="round" stroke-linejoin="round"><path d="M1.4 5 H18.6"/><path d="M6.4 4.8 C6.4 2.6 7.8 1.2 10 1.2 C12.2 1.2 13.6 2.6 13.6 4.8"/><path d="M3.2 5.2 L4.2 19.4 A2.6 2.6 0 0 0 6.8 21.8 H13.2 A2.6 2.6 0 0 0 15.8 19.4 L16.8 5.2"/><path d="M8 10 V17 M12 10 V17"/></g></svg>
<span class="tx" style="left:149.0px;top:14.00px;font-size:16.8px;letter-spacing:1.80px;">286</span>
<span class="tx" style="left:276.4px;top:13.00px;font-size:17.4px;letter-spacing:-0.85px;">INSS SOBRE DÉCIMO TERCEIRO</span>
<span class="bd bn" style="left:955px;top:12.0px">N</span>
<span class="bd bn" style="left:990px;top:12.0px">N</span>
<span class="bd bn" style="left:1025px;top:12.0px">N</span>
<span class="tx" style="left:1171.4px;top:14.00px;font-size:16.8px;letter-spacing:0.64px;">7,50</span>
<span class="tx" style="left:1329.4px;top:14.00px;font-size:16.8px;letter-spacing:0.98px;">0,00</span>
<span class="tx" style="left:1478.9px;top:14.00px;font-size:16.8px;letter-spacing:0.90px;color:#e8392f;">28,46</span>
</div>
<div style="left:0px;top:241.89999999999998px;width:1531px;height:1px;background:#dcdde0"></div>
<span class="tx" style="left:1309.4px;top:573.00px;font-size:16.8px;letter-spacing:0.85px;">428,47</span>
<span class="tx" style="left:1485.0px;top:573.00px;font-size:16.8px;letter-spacing:-0.75px;">32,13</span>
<span class="tx md" style="left:1298.1px;top:606.00px;font-size:18px;letter-spacing:0.41px;">Líquido:</span>
<span class="tx" style="left:1467.4px;top:608.00px;font-size:16.8px;letter-spacing:1.05px;">396,34</span>
</main>
<footer style="left:340px;top:895px;width:1560px;height:63px">
<span class="tx" style="left:20.4px;top:21.00px;font-size:18px;letter-spacing:1.05px;">30 / Página</span>
<svg class="ic" style="left:138.7px;top:25.6px;" width="15.4" height="9.6" viewBox="0 0 16 10" ><path d="M1.4 1.4 L8 8.4 L14.6 1.4" fill="none" stroke="#555" stroke-width="1.8" stroke-linecap="round" stroke-linejoin="round"/></svg>
<svg class="ic" style="left:179.8px;top:22.7px;" width="19.6" height="15.2" viewBox="0 0 18 13" ><path d="M7.6 1.2 L2.4 6.5 L7.6 11.8 M15.6 1.2 L10.4 6.5 L15.6 11.8" fill="none" stroke="#ababab" stroke-width="1.7" stroke-linecap="round" stroke-linejoin="round"/></svg>
<svg class="ic" style="left:227.1px;top:22.7px;" width="9.3" height="15.2" viewBox="0 0 8 13" ><path d="M6.6 1.2 L1.4 6.5 L6.6 11.8" fill="none" stroke="#ababab" stroke-width="1.7" stroke-linecap="round" stroke-linejoin="round"/></svg>
<div style="left:255px;top:16px;width:74.8px;height:28px;border:1px solid #d2d5d9;border-radius:14px;background:#fff"></div>
<span class="tx" style="left:288.9px;top:21.00px;font-size:18px;letter-spacing:-2.60px;">1</span>
<span class="tx" style="left:338.7px;top:23.00px;font-size:18px;letter-spacing:-0.36px;">/ 1</span>
<svg class="ic" style="left:375.6px;top:22.7px;" width="9.3" height="15.2" viewBox="0 0 8 13" ><path d="M1.4 1.2 L6.6 6.5 L1.4 11.8" fill="none" stroke="#ababab" stroke-width="1.7" stroke-linecap="round" stroke-linejoin="round"/></svg>
<svg class="ic" style="left:413.4px;top:22.7px;" width="19.6" height="15.2" viewBox="0 0 18 13" ><path d="M2.4 1.2 L7.6 6.5 L2.4 11.8 M10.4 1.2 L15.6 6.5 L10.4 11.8" fill="none" stroke="#ababab" stroke-width="1.7" stroke-linecap="round" stroke-linejoin="round"/></svg>
<span class="tx" style="left:446.1px;top:23.00px;font-size:18px;letter-spacing:0.55px;">4 Registros</span>
<svg class="ic" style="left:1492.2px;top:2.7px;" width="54.6" height="54.6" viewBox="0 0 56 56" ><clipPath id="cas"><path d="M28 2.4 A25.6 25.6 0 0 1 28 53.6 H2.4 V28 A25.6 25.6 0 0 1 28 2.4 Z"/></clipPath><path d="M28 1.2 A26.8 26.8 0 0 1 28 54.8 H1.2 V28 A26.8 26.8 0 0 1 28 1.2 Z" fill="#c1e3fb" stroke="#1a73e8" stroke-width="2.2"/><g clip-path="url(#cas)"><path d="M6 56 C7 44 6.6 34 8 24 C9.6 10 17 2.4 27 2.4 C33 2.4 37.6 4 39.6 8 C45 14 48.6 22 48.4 32 C48.2 40 47.6 46 46 52 L40 56 Z" fill="#4b332c"/><path d="M3 56 C5 49 10 45 18 43.6 L36 43.6 C41 44.6 44 47 45.4 50 L40 56 Z" fill="#e9e6e6"/><path d="M19.6 34 H33.6 V44 C31 48.6 23 48.6 19.6 44.4 Z" fill="#dcae98"/><path d="M17.6 43.8 L24 49.6 L24.6 56 M35.6 43.8 L31 49.6 L32 56" stroke="#cfcaca" stroke-width="0.9" fill="none"/><ellipse cx="25.2" cy="22.6" rx="13.6" ry="16.4" fill="#ecc6b3" transform="rotate(-6 25.2 22.6)"/><path d="M11.4 20 C12 9.6 19 5.4 26.6 5.6 C33 5.8 37.6 9 39.4 17 C35 12 31 10 26.6 10.4 C20 11 15 14 11.4 20 Z" fill="#4b332c"/><path d="M14.6 15.4 C16.6 14 19.6 13.8 22 14.6 M29 13.4 C31.6 12.2 34.6 12.4 36.8 13.8" stroke="#3a2620" stroke-width="1.3" fill="none" stroke-linecap="round"/><circle cx="18.8" cy="19.8" r="4.9" fill="#d9c4c4" fill-opacity="0.55" stroke="#454850" stroke-width="1.5"/><circle cx="32.6" cy="18.2" r="4.9" fill="#d9c4c4" fill-opacity="0.55" stroke="#454850" stroke-width="1.5"/><path d="M23.6 19 C25 17.8 26.6 17.6 27.8 18.4 M13.9 20 L11.4 19.4 M37.4 17.4 L39.6 16.6" stroke="#454850" stroke-width="1.3" fill="none"/><path d="M20.6 29.4 C24 28.2 29 27.6 32.6 28.2 C31.6 32.6 23.6 33.8 20.6 29.4 Z" fill="#c2564f"/><path d="M21.8 29.6 C25 28.8 28.6 28.4 31.4 28.8 C30.4 31 24.4 31.8 21.8 29.6 Z" fill="#f7f3f0"/></g></svg>
</footer>
</body>
</html>
